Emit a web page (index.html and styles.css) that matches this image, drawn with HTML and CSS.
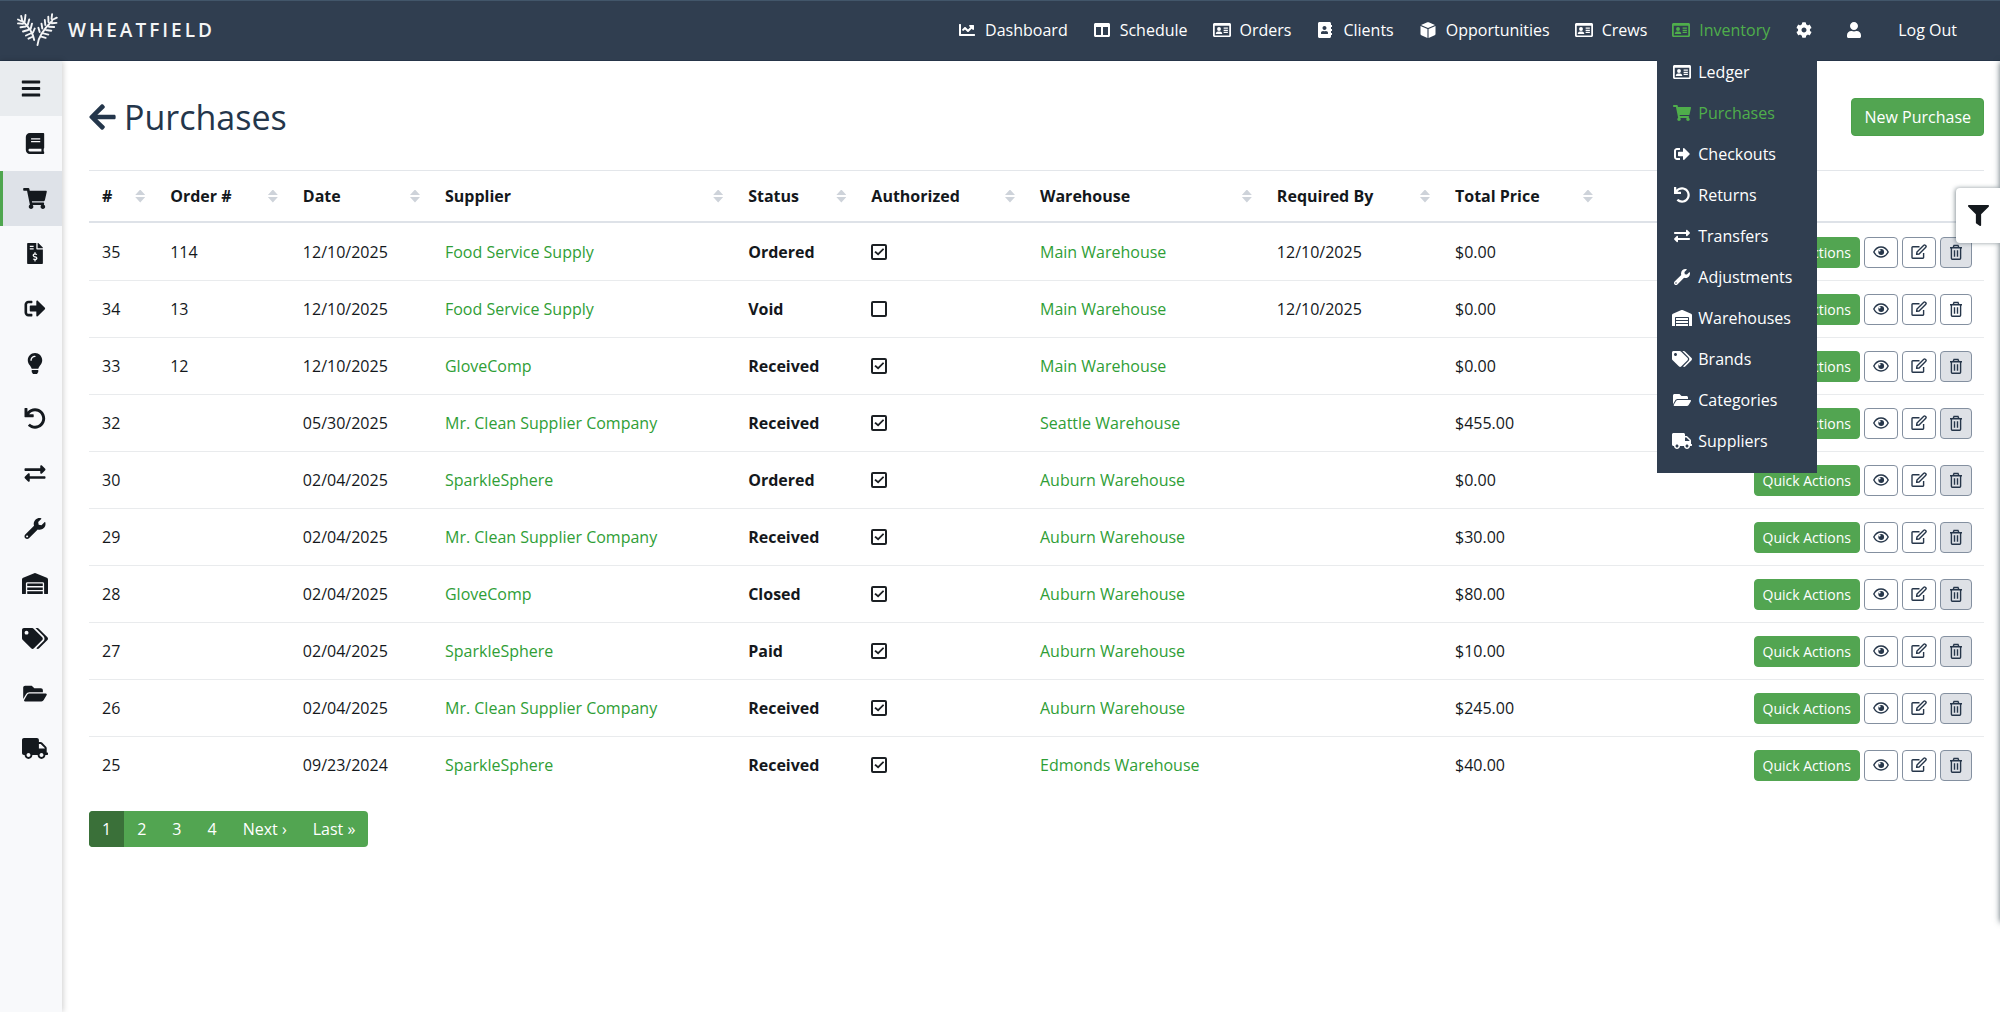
FILE: index.html
```html
<!DOCTYPE html>
<html lang="en">
<head>
    <meta charset="UTF-8">
    <meta name="viewport" content="width=device-width, initial-scale=1.0">
    <title>Purchases - Wheatfield</title>
    <link rel="stylesheet" href="styles.css">
</head>
<body>

    <!-- Icon sprite -->
    <svg class="sprite" aria-hidden="true">
        <symbol id="bars" viewBox="0 0 448 512"><path d="M16 132h416c8.800 0 16-7.200 16-16V76c0-8.800-7.200-16-16-16H16C7.200 60 0 67.200 0 76v40c0 8.800 7.200 16 16 16zm0 160h416c8.800 0 16-7.200 16-16v-40c0-8.800-7.200-16-16-16H16c-8.800 0-16 7.200-16 16v40c0 8.800 7.200 16 16 16zm0 160h416c8.800 0 16-7.200 16-16v-40c0-8.800-7.200-16-16-16H16c-8.800 0-16 7.200-16 16v40c0 8.800 7.200 16 16 16z"/></symbol>
        <symbol id="arrow-left" viewBox="0 0 448 512"><path d="M257.500 445.100l-22.200 22.200c-9.400 9.400-24.600 9.400-33.900 0L7 273c-9.400-9.400-9.400-24.600 0-33.900L201.400 44.700c9.400-9.400 24.600-9.400 33.900 0l22.200 22.200c9.500 9.500 9.300 25-.4 34.300L136.600 216H424c13.300 0 24 10.700 24 24v32c0 13.300-10.700 24-24 24H136.600l120.500 114.800c9.800 9.300 10 24.800.4 34.300z"/></symbol>
        <symbol id="book" viewBox="0 0 448 512"><path d="M448 360V24c0-13.300-10.700-24-24-24H96C43 0 0 43 0 96v320c0 53 43 96 96 96h328c13.300 0 24-10.700 24-24v-16c0-7.500-3.500-14.300-8.900-18.700-4.200-15.400-4.200-59.300 0-74.700 5.400-4.300 8.900-11.100 8.900-18.600zM128 134c0-3.300 2.700-6 6-6h212c3.300 0 6 2.700 6 6v20c0 3.300-2.700 6-6 6H134c-3.300 0-6-2.700-6-6v-20zm0 64c0-3.300 2.700-6 6-6h212c3.300 0 6 2.700 6 6v20c0 3.300-2.700 6-6 6H134c-3.300 0-6-2.700-6-6v-20zm253.400 250H96c-17.700 0-32-14.300-32-32 0-17.600 14.400-32 32-32h285.400c-1.900 17.100-1.900 46.900 0 64z"/></symbol>
        <symbol id="cart" viewBox="0 0 576 512"><path d="M528.120 301.319l47.273-208C578.806 78.301 567.391 64 551.990 64H159.208l-9.166-44.810C147.758 8.021 137.930 0 126.529 0H24C10.745 0 0 10.745 0 24v16c0 13.255 10.745 24 24 24h69.883l70.248 343.435C147.325 417.100 136 435.222 136 456c0 30.928 25.072 56 56 56s56-25.072 56-56c0-15.674-6.447-29.835-16.824-40h209.647C430.447 426.165 424 440.326 424 456c0 30.928 25.072 56 56 56s56-25.072 56-56c0-22.172-12.888-41.332-31.579-50.405l5.517-24.276c3.413-15.018-8.002-29.319-23.403-29.319H218.117l-6.545-32h293.145c11.206 0 20.920-7.754 23.403-18.681z"/></symbol>
        <symbol id="invoice" viewBox="0 0 384 512"><path d="M377 105L279.100 7c-4.500-4.500-10.600-7-17-7H256v128h128v-6.100c0-6.300-2.500-12.400-7-16.900zm-153 31V0H24C10.700 0 0 10.700 0 24v464c0 13.300 10.700 24 24 24h336c13.300 0 24-10.700 24-24V160H248c-13.200 0-24-10.800-24-24zM64 72c0-4.420 3.580-8 8-8h80c4.420 0 8 3.580 8 8v16c0 4.420-3.580 8-8 8H72c-4.420 0-8-3.580-8-8V72zm0 80v-16c0-4.420 3.580-8 8-8h80c4.420 0 8 3.580 8 8v16c0 4.420-3.580 8-8 8H72c-4.420 0-8-3.580-8-8zm144 263.880V440c0 4.420-3.580 8-8 8h-16c-4.420 0-8-3.580-8-8v-24.290c-11.290-.58-22.270-4.520-31.370-11.350-3.900-2.930-4.100-8.770-.57-12.140l11.750-11.210c2.770-2.640 6.890-2.760 10.130-.73 3.870 2.420 8.260 3.720 12.820 3.720h28.110c6.500 0 11.800-5.920 11.800-13.190 0-5.950-3.610-11.190-8.770-12.730l-45-13.500c-18.590-5.580-31.580-23.420-31.580-43.390 0-24.520 19.050-44.440 42.670-45.070V232c0-4.420 3.580-8 8-8h16c4.420 0 8 3.580 8 8v24.290c11.290.58 22.270 4.510 31.370 11.350 3.900 2.930 4.100 8.770.57 12.140l-11.750 11.210c-2.770 2.640-6.890 2.760-10.130.73-3.870-2.430-8.260-3.720-12.820-3.720h-28.110c-6.500 0-11.800 5.920-11.800 13.190 0 5.950 3.610 11.190 8.770 12.730l45 13.500c18.590 5.580 31.580 23.420 31.580 43.390 0 24.530-19.050 44.440-42.670 45.070z"/></symbol>
        <symbol id="checkout" viewBox="0 0 512 512"><path d="M497 273L329 441c-15 15-41 4.500-41-17v-96H152c-13.300 0-24-10.700-24-24v-96c0-13.300 10.700-24 24-24h136V88c0-21.400 25.900-32 41-17l168 168c9.300 9.400 9.300 24.600 0 34zM192 436v-40c0-6.600-5.400-12-12-12H96c-17.700 0-32-14.300-32-32V160c0-17.700 14.300-32 32-32h84c6.600 0 12-5.400 12-12V76c0-6.600-5.400-12-12-12H96c-53 0-96 43-96 96v192c0 53 43 96 96 96h84c6.600 0 12-5.400 12-12z"/></symbol>
        <symbol id="bulb" viewBox="0 0 352 512"><path d="M96.060 454.350c.01 6.290 1.870 12.450 5.360 17.690l17.090 25.690a31.990 31.990 0 0 0 26.640 14.280h61.710a31.990 31.990 0 0 0 26.640-14.280l17.090-25.690a31.989 31.989 0 0 0 5.360-17.690l.04-38.350H96.010l.05 38.350zM0 176c0 44.370 16.450 84.850 43.560 115.780 16.520 18.850 42.360 58.230 52.210 91.450.04.26.07.52.11.78h160.240c.04-.26.07-.51.11-.78 9.850-33.220 35.690-72.600 52.210-91.450C335.550 260.850 352 220.370 352 176 352 78.610 272.910-.3 175.450 0 73.440.31 0 82.970 0 176zm176-80c-44.110 0-80 35.890-80 80 0 8.840-7.160 16-16 16s-16-7.160-16-16c0-61.760 50.240-112 112-112 8.840 0 16 7.160 16 16s-7.160 16-16 16z"/></symbol>
        <symbol id="undo" viewBox="0 0 512 512"><path d="M212.333 224.333H12c-6.627 0-12-5.373-12-12V12C0 5.373 5.373 0 12 0h48c6.627 0 12 5.373 12 12v78.112C117.773 39.279 184.260 7.470 258.175 8.007c136.906.994 246.448 111.623 246.157 248.532C504.041 393.258 393.120 504 256.333 504c-64.089 0-122.496-24.313-166.510-64.215-5.099-4.622-5.334-12.554-.467-17.420l33.967-33.967c4.474-4.474 11.662-4.717 16.401-.525C170.760 415.336 211.580 432 256.333 432c97.268 0 176-78.716 176-176 0-97.267-78.716-176-176-176-58.496 0-110.280 28.476-142.274 72.333h98.274c6.627 0 12 5.373 12 12v48c0 6.627-5.373 12-12 12z"/></symbol>
        <symbol id="exchange" viewBox="0 0 512 512"><path d="M0 168v-16c0-13.255 10.745-24 24-24h360V80c0-21.367 25.899-32.042 40.971-16.971l80 80c9.372 9.373 9.372 24.569 0 33.941l-80 80C409.956 271.982 384 261.456 384 240v-48H24c-13.255 0-24-10.745-24-24zm488 152H128v-48c0-21.314-25.862-32.080-40.971-16.971l-80 80c-9.372 9.373-9.372 24.569 0 33.941l80 80C102.057 463.997 128 453.437 128 432v-48h360c13.255 0 24-10.745 24-24v-16c0-13.255-10.745-24-24-24z"/></symbol>
        <symbol id="wrench" viewBox="0 0 512 512"><path d="M507.730 109.100c-2.240-9.030-13.540-12.090-20.120-5.510l-74.360 74.360-67.880-11.310-11.310-67.880 74.360-74.360c6.620-6.620 3.430-17.900-5.660-20.160-47.380-11.740-99.550.91-136.580 37.930-39.640 39.640-50.550 97.100-34.050 147.200L18.740 402.760c-24.990 24.990-24.990 65.510 0 90.500 24.990 24.990 65.510 24.990 90.500 0l213.210-213.210c50.120 16.710 107.470 5.680 147.370-34.220 37.070-37.070 49.700-89.320 37.910-136.730zM64 472c-13.250 0-24-10.750-24-24 0-13.260 10.750-24 24-24s24 10.740 24 24c0 13.250-10.750 24-24 24z"/></symbol>
        <symbol id="warehouse" viewBox="0 0 640 512"><path d="M504 352H136.400c-4.400 0-8 3.600-8 8l-.1 48c0 4.400 3.600 8 8 8H504c4.400 0 8-3.600 8-8v-48c0-4.400-3.600-8-8-8zm0 96H136.100c-4.400 0-8 3.600-8 8l-.1 48c0 4.400 3.600 8 8 8h368c4.400 0 8-3.600 8-8v-48c0-4.400-3.600-8-8-8zm0-192H136.600c-4.400 0-8 3.600-8 8l-.1 48c0 4.400 3.600 8 8 8H504c4.400 0 8-3.600 8-8v-48c0-4.400-3.600-8-8-8zm106.500-139L338.400 3.700a48.150 48.150 0 0 0-36.900 0L29.500 117C11.700 124.500 0 141.900 0 161.300V504c0 4.400 3.600 8 8 8h80c4.400 0 8-3.600 8-8V256c0-17.600 14.600-32 32.600-32h382.800c18 0 32.600 14.400 32.600 32v248c0 4.400 3.600 8 8 8h80c4.400 0 8-3.600 8-8V161.300c0-19.400-11.700-36.800-29.500-44.300z"/></symbol>
        <symbol id="tags" viewBox="0 0 640 512"><path d="M497.941 225.941L286.059 14.059A48 48 0 0 0 252.118 0H48C21.490 0 0 21.490 0 48v204.118a48 48 0 0 0 14.059 33.941l211.882 211.882c18.744 18.745 49.136 18.746 67.882 0l204.118-204.118c18.745-18.745 18.745-49.137 0-67.882zM112 160c-26.510 0-48-21.490-48-48s21.490-48 48-48 48 21.490 48 48-21.490 48-48 48zm513.941 133.823L421.823 497.941c-18.745 18.745-49.137 18.745-67.882 0l-.36-.36L527.640 323.522c16.999-16.999 26.360-39.600 26.360-63.640s-9.362-46.641-26.360-63.640L331.397 0h48.721a48 48 0 0 1 33.941 14.059l211.882 211.882c18.745 18.745 18.745 49.137 0 67.882z"/></symbol>
        <symbol id="folder" viewBox="0 0 576 512"><path d="M572.694 292.093L500.270 416.248A63.997 63.997 0 0 1 444.989 448H45.025c-18.523 0-30.064-20.093-20.731-36.093l72.424-124.155A64 64 0 0 1 152 256h399.964c18.523 0 30.064 20.093 20.730 36.093zM152 224h328v-48c0-26.510-21.490-48-48-48H272l-64-64H48C21.490 64 0 85.490 0 112v278.046l69.077-118.418C86.214 242.250 117.989 224 152 224z"/></symbol>
        <symbol id="truck" viewBox="0 0 640 512"><path d="M624 352h-16V243.900c0-12.700-5.100-24.900-14.100-33.900L494 110.100c-9-9-21.200-14.100-33.900-14.100H416V48c0-26.500-21.500-48-48-48H48C21.500 0 0 21.500 0 48v320c0 26.500 21.500 48 48 48h16c0 53 43 96 96 96s96-43 96-96h128c0 53 43 96 96 96s96-43 96-96h48c8.800 0 16-7.200 16-16v-32c0-8.800-7.200-16-16-16zM160 464c-26.500 0-48-21.500-48-48s21.500-48 48-48 48 21.500 48 48-21.500 48-48 48zm320 0c-26.500 0-48-21.500-48-48s21.500-48 48-48 48 21.500 48 48-21.500 48-48 48zm80-208H416V144h44.100l99.900 99.900V256z"/></symbol>
        <symbol id="chart" viewBox="0 0 512 512"><path d="M496 384H64V80c0-8.840-7.160-16-16-16H16C7.160 64 0 71.160 0 80v336c0 17.670 14.330 32 32 32h464c8.840 0 16-7.160 16-16v-32c0-8.840-7.160-16-16-16zM464 96H345.940c-21.380 0-32.090 25.850-16.970 40.970l32.400 32.400L288 242.750l-73.370-73.370c-12.500-12.500-32.760-12.500-45.250 0l-68.690 68.690c-6.250 6.250-6.250 16.380 0 22.630l22.620 22.620c6.250 6.250 16.380 6.250 22.630 0L192 237.250l73.370 73.370c12.500 12.500 32.760 12.500 45.250 0l96-96 32.400 32.400c15.120 15.120 40.970 4.410 40.970-16.970V112c.01-8.840-7.150-16-15.990-16z"/></symbol>
        <symbol id="columns" viewBox="0 0 512 512"><path d="M464 32H48C21.490 32 0 53.490 0 80v352c0 26.510 21.490 48 48 48h416c26.510 0 48-21.490 48-48V80c0-26.510-21.490-48-48-48zM224 416H64V160h160v256zm224 0H288V160h160v256z"/></symbol>
        <symbol id="id-card" viewBox="0 0 576 512"><path fill-rule="evenodd" d="M528 32H48C21.500 32 0 53.500 0 80v352c0 26.500 21.500 48 48 48h480c26.500 0 48-21.500 48-48V80c0-26.500-21.500-48-48-48zm-8 396H56V116h464z"/><circle cx="192" cy="222" r="62"/><path d="M88 384c0-50 32-84 72-84h64c40 0 72 34 72 84z"/><path d="M340 176h136v40H340zm0 68h136v40H340zm0 68h136v40H340z"/></symbol>
        <symbol id="address-book" viewBox="0 0 448 512"><path d="M436 160c6.600 0 12-5.400 12-12v-40c0-6.600-5.400-12-12-12h-20V48c0-26.500-21.500-48-48-48H48C21.500 0 0 21.500 0 48v416c0 26.500 21.500 48 48 48h320c26.500 0 48-21.500 48-48v-48h20c6.600 0 12-5.400 12-12v-40c0-6.600-5.400-12-12-12h-20v-64h20c6.600 0 12-5.400 12-12v-40c0-6.600-5.400-12-12-12h-20v-64h20zm-228-32c35.300 0 64 28.700 64 64s-28.700 64-64 64-64-28.700-64-64 28.700-64 64-64zm112 236.800c0 10.600-10 19.200-22.400 19.200H118.400C106 384 96 375.400 96 364.800v-19.200c0-31.800 30.100-57.600 67.200-57.600h5c12.300 5.100 25.700 8 39.800 8s27.600-2.900 39.800-8h5c37.100 0 67.200 25.800 67.200 57.600v19.200z"/></symbol>
        <symbol id="cube" viewBox="0 0 512 512"><path d="M236 10c13-5 27-5 40 0l204 84-224 96L32 94zM16 124l222 98v286L42 422c-16-8-26-22-26-40zM496 124l-222 98v286l196-86c16-8 26-22 26-40z"/></symbol>
        <symbol id="cog" viewBox="0 0 512 512"><path d="M487.400 315.700l-42.600-24.600c4.300-23.200 4.300-47 0-70.200l42.600-24.600c4.900-2.800 7.100-8.600 5.500-14-11.100-35.600-30-67.800-54.700-94.600-3.800-4.100-10-5.100-14.800-2.300L380.800 110c-17.900-15.400-38.500-27.300-60.800-35.100V25.800c0-5.600-3.900-10.500-9.400-11.700-36.700-8.200-74.300-7.800-109.200 0-5.500 1.200-9.400 6.100-9.400 11.700V75c-22.200 7.900-42.800 19.800-60.800 35.100L88.700 85.500c-4.900-2.800-11-1.900-14.800 2.300-24.700 26.700-43.600 58.900-54.700 94.600-1.700 5.400.6 11.200 5.500 14L67.300 221c-4.300 23.200-4.300 47 0 70.200l-42.600 24.600c-4.900 2.800-7.100 8.600-5.500 14 11.100 35.600 30 67.800 54.700 94.600 3.800 4.100 10 5.100 14.800 2.300l42.600-24.600c17.900 15.400 38.500 27.300 60.800 35.100v49.200c0 5.600 3.900 10.500 9.400 11.700 36.700 8.200 74.300 7.800 109.200 0 5.500-1.200 9.400-6.100 9.400-11.700v-49.200c22.200-7.900 42.800-19.800 60.800-35.100l42.600 24.600c4.900 2.800 11 1.900 14.800-2.300 24.700-26.700 43.600-58.900 54.700-94.600 1.500-5.500-.7-11.300-5.600-14.100zM256 336c-44.100 0-80-35.900-80-80s35.900-80 80-80 80 35.900 80 80-35.900 80-80 80z"/></symbol>
        <symbol id="user" viewBox="0 0 448 512"><path d="M224 256c70.700 0 128-57.300 128-128S294.700 0 224 0 96 57.300 96 128s57.300 128 128 128zm89.600 32h-16.700c-22.200 10.200-46.900 16-72.900 16s-50.600-5.800-72.900-16h-16.700C60.200 288 0 348.200 0 422.400V464c0 26.500 21.500 48 48 48h352c26.500 0 48-21.500 48-48v-41.600c0-74.200-60.200-134.400-134.400-134.400z"/></symbol>
        <symbol id="filter" viewBox="0 0 512 512"><path d="M487.976 0H24.028C2.710 0-8.047 25.866 7.058 40.971L192 225.941V432c0 7.831 3.821 15.170 10.237 19.662l80 55.980C298.020 518.690 320 507.493 320 487.980V225.941l184.947-184.970C520.021 25.896 509.338 0 487.976 0z"/></symbol>
        <symbol id="eye" viewBox="0 0 16 16"><path fill="none" stroke="currentColor" stroke-width="1.400" d="M.8 8C2.500 4.700 5 3 8 3s5.500 1.700 7.200 5c-1.700 3.300-4.200 5-7.200 5S2.500 11.300.8 8z"/><circle cx="8.200" cy="8" r="2.900"/><circle cx="6.600" cy="6.600" r="1" fill="#ffffff"/></symbol>
        <symbol id="edit" viewBox="0 0 16 16"><path fill="none" stroke="currentColor" stroke-width="1.400" stroke-linejoin="round" d="M8.500 2.700H1.700a.7.7 0 0 0-.7.7v10.200c0 .4.300.7.7.7h10.200c.4 0 .7-.3.7-.7V9M5.600 10.400l.4-2.500 6.800-6.700c.5-.4 1-.4 1.400 0l.6.6c.4.4.4 1 0 1.400L8.100 10z"/></symbol>
        <symbol id="trash" viewBox="0 0 14 16"><path fill="none" stroke="currentColor" stroke-width="1.400" d="M1 3.700h12M4.200 3.500l.8-2h4l.8 2M2.400 3.700v10.600c0 .5.400.9.900.9h7.400c.5 0 .9-.4.9-.9V3.700M5.500 6.200v6.500M8.500 6.200v6.500"/></symbol>
        <symbol id="wheat" viewBox="0 0 41 33"><path fill="none" stroke="currentColor" stroke-width="1.900" stroke-linecap="round" d="M20.500 32C21 24 26 17 35 8M17.200 27C16 20 11 13 5 7.500M36 6.500l3.800-1.800M34.500 6l.6-4.800M31.500 9l-.2-5.200M28.300 12l-.5-5M25.300 15.500l-.8-4.800M22.700 19l-1.300-4.200M35 10.300l4.500-.4M32 13.700l5.200.3M29 17l5.300.7M26.300 20.400l5 1.200M24.400 23.700l4.200 1.200M5 6.500L4.200 3M7.600 8.800L8.500 2M10.700 12l1.500-5.600M13.700 15.800l1.300-5.200M16 19.500l1.700-4M4 8L1 6.500M6 10.700l-5-.3M8.700 13.500l-5.200.8M11.200 17l-5.200 1.500M13.500 20.500L9 22.500M15 24l-3.500 1.700"/></symbol>
    </svg>

    <header class="topbar">
        <a href="#" class="brand">
            <svg class="brand-mark" aria-hidden="true"><use href="#wheat"/></svg>
            <span>WHEATFIELD</span>
        </a>
        <nav>
            <ul class="nav">
                <li><a href="#"><svg class="icon"><use href="#chart"/></svg>Dashboard</a></li>
                <li><a href="#"><svg class="icon"><use href="#columns"/></svg>Schedule</a></li>
                <li><a href="#"><svg class="icon"><use href="#id-card"/></svg>Orders</a></li>
                <li><a href="#"><svg class="icon"><use href="#address-book"/></svg>Clients</a></li>
                <li><a href="#"><svg class="icon"><use href="#cube"/></svg>Opportunities</a></li>
                <li><a href="#"><svg class="icon"><use href="#id-card"/></svg>Crews</a></li>
                <li class="has-menu">
                    <a href="#" class="active"><svg class="icon"><use href="#id-card"/></svg>Inventory</a>
                    <ul class="menu">
                        <li><a href="#"><svg class="icon"><use href="#id-card"/></svg>Ledger</a></li>
                        <li><a href="#" class="active"><svg class="icon"><use href="#cart"/></svg>Purchases</a></li>
                        <li><a href="#"><svg class="icon"><use href="#checkout"/></svg>Checkouts</a></li>
                        <li><a href="#"><svg class="icon"><use href="#undo"/></svg>Returns</a></li>
                        <li><a href="#"><svg class="icon"><use href="#exchange"/></svg>Transfers</a></li>
                        <li><a href="#"><svg class="icon"><use href="#wrench"/></svg>Adjustments</a></li>
                        <li><a href="#"><svg class="icon"><use href="#warehouse"/></svg>Warehouses</a></li>
                        <li><a href="#"><svg class="icon"><use href="#tags"/></svg>Brands</a></li>
                        <li><a href="#"><svg class="icon"><use href="#folder"/></svg>Categories</a></li>
                        <li><a href="#"><svg class="icon"><use href="#truck"/></svg>Suppliers</a></li>
                    </ul>
                </li>
                <li><a href="#" aria-label="Settings"><svg class="icon"><use href="#cog"/></svg></a></li>
                <li class="account"><a href="#" aria-label="Account"><svg class="icon"><use href="#user"/></svg></a></li>
                <li class="logout"><a href="#">Log Out</a></li>
            </ul>
        </nav>
    </header>

    <div class="layout">
        <aside class="sidebar">
            <button type="button" class="toggle" aria-label="Toggle sidebar"><svg><use href="#bars"/></svg></button>
            <a href="#" aria-label="Ledger"><svg><use href="#book"/></svg></a>
            <a href="#" aria-label="Purchases" class="current"><svg><use href="#cart"/></svg></a>
            <a href="#" aria-label="Invoices"><svg><use href="#invoice"/></svg></a>
            <a href="#" aria-label="Checkouts"><svg><use href="#checkout"/></svg></a>
            <a href="#" aria-label="Ideas"><svg><use href="#bulb"/></svg></a>
            <a href="#" aria-label="Returns"><svg><use href="#undo"/></svg></a>
            <a href="#" aria-label="Transfers"><svg><use href="#exchange"/></svg></a>
            <a href="#" aria-label="Adjustments"><svg><use href="#wrench"/></svg></a>
            <a href="#" aria-label="Warehouses"><svg><use href="#warehouse"/></svg></a>
            <a href="#" aria-label="Brands"><svg><use href="#tags"/></svg></a>
            <a href="#" aria-label="Categories"><svg><use href="#folder"/></svg></a>
            <a href="#" aria-label="Suppliers"><svg><use href="#truck"/></svg></a>
        </aside>

        <main>
            <div class="page-head">
                <h1><a href="#" aria-label="Back"><svg><use href="#arrow-left"/></svg></a>Purchases</h1>
                <button type="button" class="btn">New Purchase</button>
            </div>

            <table class="purchases">
                <colgroup>
                    <col class="c-id"><col class="c-order"><col class="c-date"><col class="c-supplier"><col class="c-status">
                    <col class="c-auth"><col class="c-warehouse"><col class="c-required"><col class="c-total"><col>
                </colgroup>
                <thead>
                    <tr>
                        <th><span class="sort">#</span></th>
                        <th><span class="sort">Order #</span></th>
                        <th><span class="sort">Date</span></th>
                        <th><span class="sort">Supplier</span></th>
                        <th><span class="sort">Status</span></th>
                        <th><span class="sort">Authorized</span></th>
                        <th><span class="sort">Warehouse</span></th>
                        <th><span class="sort">Required By</span></th>
                        <th><span class="sort">Total Price</span></th>
                        <th></th>
                    </tr>
                </thead>
                <tbody>
                    <tr>
                        <td>35</td><td>114</td><td>12/10/2025</td><td><a href="#">Food Service Supply</a></td><td><b>Ordered</b></td>
                        <td><input type="checkbox" aria-label="Authorized" checked></td><td><a href="#">Main Warehouse</a></td><td>12/10/2025</td><td>$0.00</td>
                        <td><div class="actions"><button type="button" class="quick">Quick Actions</button><button type="button" aria-label="View"><svg><use href="#eye"/></svg></button><button type="button" aria-label="Edit"><svg><use href="#edit"/></svg></button><button type="button" class="delete" aria-label="Delete" disabled><svg><use href="#trash"/></svg></button></div></td>
                    </tr>
                    <tr>
                        <td>34</td><td>13</td><td>12/10/2025</td><td><a href="#">Food Service Supply</a></td><td><b>Void</b></td>
                        <td><input type="checkbox" aria-label="Authorized"></td><td><a href="#">Main Warehouse</a></td><td>12/10/2025</td><td>$0.00</td>
                        <td><div class="actions"><button type="button" class="quick">Quick Actions</button><button type="button" aria-label="View"><svg><use href="#eye"/></svg></button><button type="button" aria-label="Edit"><svg><use href="#edit"/></svg></button><button type="button" class="delete" aria-label="Delete"><svg><use href="#trash"/></svg></button></div></td>
                    </tr>
                    <tr>
                        <td>33</td><td>12</td><td>12/10/2025</td><td><a href="#">GloveComp</a></td><td><b>Received</b></td>
                        <td><input type="checkbox" aria-label="Authorized" checked></td><td><a href="#">Main Warehouse</a></td><td></td><td>$0.00</td>
                        <td><div class="actions"><button type="button" class="quick">Quick Actions</button><button type="button" aria-label="View"><svg><use href="#eye"/></svg></button><button type="button" aria-label="Edit"><svg><use href="#edit"/></svg></button><button type="button" class="delete" aria-label="Delete" disabled><svg><use href="#trash"/></svg></button></div></td>
                    </tr>
                    <tr>
                        <td>32</td><td></td><td>05/30/2025</td><td><a href="#">Mr. Clean Supplier Company</a></td><td><b>Received</b></td>
                        <td><input type="checkbox" aria-label="Authorized" checked></td><td><a href="#">Seattle Warehouse</a></td><td></td><td>$455.00</td>
                        <td><div class="actions"><button type="button" class="quick">Quick Actions</button><button type="button" aria-label="View"><svg><use href="#eye"/></svg></button><button type="button" aria-label="Edit"><svg><use href="#edit"/></svg></button><button type="button" class="delete" aria-label="Delete" disabled><svg><use href="#trash"/></svg></button></div></td>
                    </tr>
                    <tr>
                        <td>30</td><td></td><td>02/04/2025</td><td><a href="#">SparkleSphere</a></td><td><b>Ordered</b></td>
                        <td><input type="checkbox" aria-label="Authorized" checked></td><td><a href="#">Auburn Warehouse</a></td><td></td><td>$0.00</td>
                        <td><div class="actions"><button type="button" class="quick">Quick Actions</button><button type="button" aria-label="View"><svg><use href="#eye"/></svg></button><button type="button" aria-label="Edit"><svg><use href="#edit"/></svg></button><button type="button" class="delete" aria-label="Delete" disabled><svg><use href="#trash"/></svg></button></div></td>
                    </tr>
                    <tr>
                        <td>29</td><td></td><td>02/04/2025</td><td><a href="#">Mr. Clean Supplier Company</a></td><td><b>Received</b></td>
                        <td><input type="checkbox" aria-label="Authorized" checked></td><td><a href="#">Auburn Warehouse</a></td><td></td><td>$30.00</td>
                        <td><div class="actions"><button type="button" class="quick">Quick Actions</button><button type="button" aria-label="View"><svg><use href="#eye"/></svg></button><button type="button" aria-label="Edit"><svg><use href="#edit"/></svg></button><button type="button" class="delete" aria-label="Delete" disabled><svg><use href="#trash"/></svg></button></div></td>
                    </tr>
                    <tr>
                        <td>28</td><td></td><td>02/04/2025</td><td><a href="#">GloveComp</a></td><td><b>Closed</b></td>
                        <td><input type="checkbox" aria-label="Authorized" checked></td><td><a href="#">Auburn Warehouse</a></td><td></td><td>$80.00</td>
                        <td><div class="actions"><button type="button" class="quick">Quick Actions</button><button type="button" aria-label="View"><svg><use href="#eye"/></svg></button><button type="button" aria-label="Edit"><svg><use href="#edit"/></svg></button><button type="button" class="delete" aria-label="Delete" disabled><svg><use href="#trash"/></svg></button></div></td>
                    </tr>
                    <tr>
                        <td>27</td><td></td><td>02/04/2025</td><td><a href="#">SparkleSphere</a></td><td><b>Paid</b></td>
                        <td><input type="checkbox" aria-label="Authorized" checked></td><td><a href="#">Auburn Warehouse</a></td><td></td><td>$10.00</td>
                        <td><div class="actions"><button type="button" class="quick">Quick Actions</button><button type="button" aria-label="View"><svg><use href="#eye"/></svg></button><button type="button" aria-label="Edit"><svg><use href="#edit"/></svg></button><button type="button" class="delete" aria-label="Delete" disabled><svg><use href="#trash"/></svg></button></div></td>
                    </tr>
                    <tr>
                        <td>26</td><td></td><td>02/04/2025</td><td><a href="#">Mr. Clean Supplier Company</a></td><td><b>Received</b></td>
                        <td><input type="checkbox" aria-label="Authorized" checked></td><td><a href="#">Auburn Warehouse</a></td><td></td><td>$245.00</td>
                        <td><div class="actions"><button type="button" class="quick">Quick Actions</button><button type="button" aria-label="View"><svg><use href="#eye"/></svg></button><button type="button" aria-label="Edit"><svg><use href="#edit"/></svg></button><button type="button" class="delete" aria-label="Delete" disabled><svg><use href="#trash"/></svg></button></div></td>
                    </tr>
                    <tr>
                        <td>25</td><td></td><td>09/23/2024</td><td><a href="#">SparkleSphere</a></td><td><b>Received</b></td>
                        <td><input type="checkbox" aria-label="Authorized" checked></td><td><a href="#">Edmonds Warehouse</a></td><td></td><td>$40.00</td>
                        <td><div class="actions"><button type="button" class="quick">Quick Actions</button><button type="button" aria-label="View"><svg><use href="#eye"/></svg></button><button type="button" aria-label="Edit"><svg><use href="#edit"/></svg></button><button type="button" class="delete" aria-label="Delete" disabled><svg><use href="#trash"/></svg></button></div></td>
                    </tr>
                </tbody>
            </table>

            <nav class="pagination" aria-label="Pages">
                <a href="#" class="current">1</a>
                <a href="#">2</a>
                <a href="#">3</a>
                <a href="#">4</a>
                <a href="#">Next ›</a>
                <a href="#">Last »</a>
            </nav>
        </main>
    </div>

    <!-- Filter drawer, closed: only its tab and shadow show -->
    <div class="drawer">
        <button type="button" class="drawer-tab" aria-label="Filter"><svg><use href="#filter"/></svg></button>
    </div>

</body>
</html>
```
FILE: styles.css
```css
* {
    box-sizing: border-box;
}

body {
    margin: 0;
    font-family: 'Open Sans', 'Noto Sans', sans-serif;
    font-size: 16px;
    line-height: 24px;
    color: #14181c;
    background-color: #ffffff;
}

a {
    color: #2f9e36;
    text-decoration: none;
}

button {
    font: inherit;
    cursor: pointer;
}

svg {
    fill: currentColor;
    display: block;
    flex: none;
}

.sprite {
    position: absolute;
    width: 0;
    height: 0;
}

/* Top bar */
.topbar {
    display: flex;
    justify-content: space-between;
    align-items: center;
    height: 61px;
    padding: 0 31px 2px 17px;
    background-color: #303e50;
    border-top: 1px solid #42566a;
    border-bottom: 1px solid #263549;
}

.brand {
    display: flex;
    align-items: center;
    gap: 10px;
    color: #f4f5f6;
    font-size: 19px;
    font-weight: 600;
    letter-spacing: 3px;
}

.brand-mark {
    width: 41px;
    height: 33px;
}

.nav, .menu {
    list-style: none;
    margin: 0;
    padding: 0;
}

.nav {
    display: flex;
    align-items: center;
}

.nav a {
    display: flex;
    align-items: center;
    gap: 8px;
    padding: 8px 12px;
    color: #ffffff;
}

.nav a.active {
    color: #4fae4b;
}

.icon {
    width: 20px;
    height: 16px;
}

.nav .account {
    margin: 0 10px 0 6px;
}

.has-menu {
    position: relative;
}

.menu {
    position: absolute;
    top: 100%;
    left: -2px;
    z-index: 10;
    width: 160px;
    padding: 2px 0 11px;
    background-color: #303e50;
}

.menu a {
    gap: 6px;
    height: 41px;
    padding: 0 15px;
}

/* Page */
.layout {
    display: flex;
    min-height: calc(100vh - 61px);
}

.sidebar {
    display: flex;
    flex-direction: column;
    flex: none;
    width: 62px;
    background-color: #f8f9fb;
    box-shadow: 1px 0 6px rgb(0, 0, 0, 0.2);
}

.sidebar a, .toggle {
    display: flex;
    align-items: center;
    justify-content: center;
    height: 55px;
    padding: 0 0 0 5px;
    border: 0;
    border-left: 3px solid transparent;
    color: #14191e;
}

.sidebar .toggle {
    padding: 0;
    border: 0;
    background-color: #e9ecef;
}

.sidebar .current {
    background-color: #dee2e8;
    border-left-color: #4fa64f;
}

.sidebar svg {
    width: 26px;
    height: 21px;
}

main {
    flex: 1;
    min-width: 0;
    padding: 37px 16px 36px 27px;
}

.page-head {
    display: flex;
    justify-content: space-between;
    align-items: center;
    margin-bottom: 34px;
}

h1 {
    display: flex;
    align-items: center;
    gap: 8px;
    margin: 0;
    font-size: 34px;
    font-weight: 400;
    line-height: 38px;
    color: #24364b;
}

h1 a {
    color: inherit;
}

h1 svg {
    width: 27px;
    height: 30px;
}

.btn {
    padding: 6px 12px;
    border: 1px solid #4ba04a;
    border-radius: 4px;
    background-color: #52a551;
    color: #ffffff;
}

/* Table */
.purchases {
    width: 100%;
    table-layout: fixed;
    border-collapse: separate;
    border-spacing: 0;
}

.c-id { width: 3.6%; }
.c-order { width: 7%; }
.c-date { width: 7.5%; }
.c-supplier { width: 16%; }
.c-status { width: 6.5%; }
.c-auth { width: 8.9%; }
.c-warehouse { width: 12.5%; }
.c-required { width: 9.4%; }
.c-total { width: 8.6%; }

.purchases th, .purchases td {
    padding: 0 12px 0 13px;
    text-align: left;
    white-space: nowrap;
}

.purchases th {
    height: 53px;
    border-top: 1px solid #e3e6ea;
    border-bottom: 2px solid #dee2e8;
}

.purchases td {
    height: 57px;
    border-top: 1px solid #e9ebed;
}

.purchases tbody tr:first-child td {
    border-top-color: transparent;
}

.sort {
    display: flex;
    align-items: center;
    justify-content: space-between;
}

.sort::after {
    content: '';
    width: 10px;
    height: 13px;
    background-color: #ced3da;
    clip-path: polygon(50% 0, 100% 42%, 0 42%, 0 58%, 100% 58%, 50% 100%, 0 58%, 0 42%);
}

.purchases input {
    appearance: none;
    display: grid;
    place-items: center;
    width: 16px;
    height: 16px;
    margin: 0;
    border: 2px solid #1c2024;
    border-radius: 2px;
}

.purchases input:checked::before {
    content: '';
    width: 10px;
    height: 8px;
    background-color: #1c2024;
    clip-path: polygon(0 52%, 14% 36%, 37% 62%, 86% 2%, 100% 17%, 38% 95%);
}

.actions {
    display: flex;
    justify-content: flex-end;
    gap: 4px;
}

.actions button {
    height: 31px;
    padding: 0 8px;
    border: 1px solid #8490a0;
    border-radius: 4px;
    background-color: #ffffff;
    color: #26364a;
    font-size: 14px;
    line-height: 21px;
}

.actions svg {
    width: 16px;
    height: 16px;
}

.actions .quick {
    border-color: #52a551;
    background-color: #52a551;
    color: #ffffff;
}

.actions .delete svg {
    width: 14px;
}

.actions button:disabled {
    background-color: #dee1e6;
}

/* Pagination */
.pagination {
    display: inline-flex;
    margin-top: 18px;
    border-radius: 4px;
    overflow: hidden;
    background-color: #52a551;
}

.pagination a {
    padding: 6px 13px;
    color: #ffffff;
}

.pagination .current {
    background-color: #3a7039;
}

/* Filter drawer */
.drawer {
    position: fixed;
    top: 62px;
    left: 100%;
    width: 320px;
    height: 85vh;
    background-color: #ffffff;
    box-shadow: 0 0 6px rgb(30, 50, 60, 0.7);
}

.drawer-tab {
    position: absolute;
    top: 126px;
    right: 100%;
    padding: 17px 11px 17px 12px;
    border: 0;
    border-radius: 4px 0 0 4px;
    background-color: #ffffff;
    box-shadow: -1px 0 4px rgb(30, 50, 60, 0.5);
    color: #14191e;
}

.drawer-tab svg {
    width: 21px;
    height: 21px;
}
```
